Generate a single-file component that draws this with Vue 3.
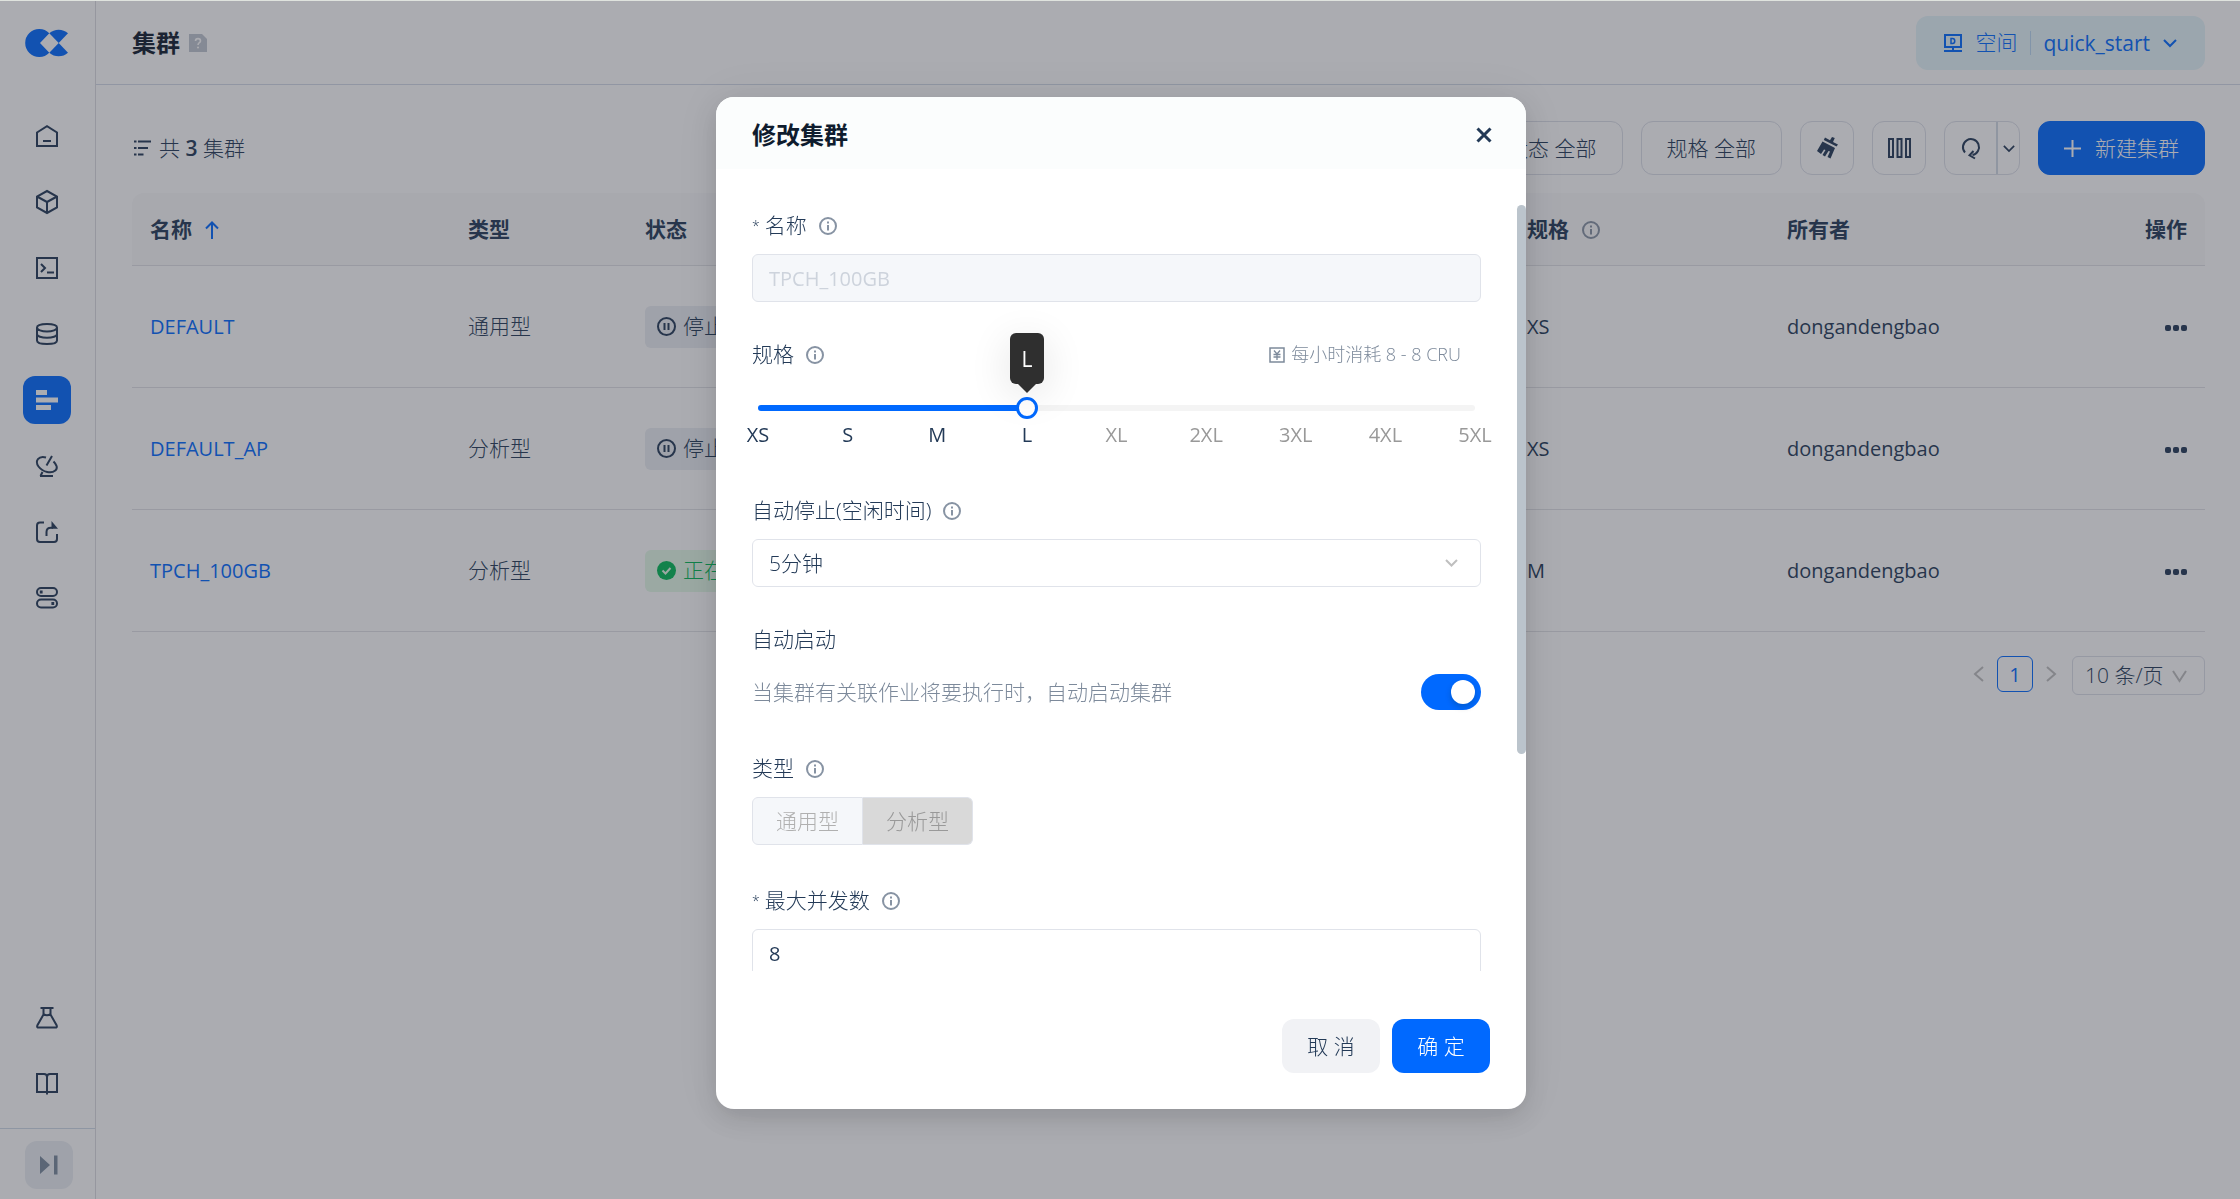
<template>
  <div class="app">
    <aside class="sidebar">
      <a href="#" class="logo" aria-label="Home">
        <svg width="42" height="28" viewBox="0 0 42 28" fill="#0069ff">
          <path d="M23.3 4.3A14 14 0 1 0 23.3 23.7L14 14Z" />
          <path d="M23.3 4.3A14 14 0 0 1 42 4.3L32.7 14Z" />
          <path d="M23.3 23.7A14 14 0 0 0 42 23.7L32.7 14Z" />
        </svg>
      </a>
      <nav class="nav">
        <a
          v-for="item in navItems"
          :key="item.name"
          href="#"
          class="nav-item"
          :class="{ active: item.active }"
          :aria-label="item.name"
        >
          <svg class="nav-icon" viewBox="0 0 22 22">
            <path v-if="item.line" :d="item.line" fill="none" stroke="currentColor" stroke-width="2" />
            <path v-if="item.fill" :d="item.fill" fill="currentColor" />
          </svg>
        </a>
      </nav>
      <nav class="nav nav-bottom">
        <a v-for="item in bottomItems" :key="item.name" href="#" class="nav-item" :aria-label="item.name">
          <svg class="nav-icon" viewBox="0 0 22 22">
            <path :d="item.line" fill="none" stroke="currentColor" stroke-width="2" />
          </svg>
        </a>
      </nav>
      <div class="collapse">
        <button type="button" class="collapse-btn" aria-label="Expand">
          <svg width="18" height="20" viewBox="0 0 18 20" fill="currentColor">
            <path d="M0 1L10 10L0 19ZM14 0.500H17.500V19.500H14Z" />
          </svg>
        </button>
      </div>
    </aside>

    <div class="main">
      <header class="topbar">
        <h1>集群</h1>
        <svg class="help" width="18" height="18" viewBox="0 0 18 18">
          <path d="M0 0H13L18 5V18H0Z" fill="#c0c6d0" />
          <path d="M6.500 7C6.500 3.800 11.500 3.800 11.500 7C11.500 8.800 9 8.600 9 11" fill="none" stroke="#fff" stroke-width="1.600" />
          <circle cx="9" cy="13.500" r="1" fill="#fff" />
        </svg>
        <button type="button" class="workspace">
          <svg width="18" height="18" viewBox="0 0 18 18" fill="none" stroke="currentColor" stroke-width="2">
            <path d="M1 1H17V13H1ZM9 13V17M0 17H18" />
            <path d="M7 4.500H8.500C11.500 4.500 11.500 9.500 8.500 9.500H7Z" stroke-width="1.500" />
          </svg>
          <span class="workspace-label">空间</span>
          <span class="workspace-name">quick_start</span>
          <svg class="chev" width="14" height="8" viewBox="0 0 14 8"><path d="M1 1L7 7L13 1" /></svg>
        </button>
      </header>

      <section class="content">
        <div class="toolbar">
          <svg width="17" height="16" viewBox="0 0 17 16" fill="currentColor">
            <path d="M0 0.500H2.500V2.500H0ZM4 0.500H17V2.500H4ZM0 7H2.500V9H0ZM4 7H14V9H4ZM0 13.500H2.500V15.500H0ZM4 13.500H9.500V15.500H4Z" />
          </svg>
          <p class="total">共 <b>3</b> 集群</p>
          <button type="button" class="tool filter">状态 全部</button>
          <button type="button" class="tool filter">规格 全部</button>
          <button type="button" class="tool square" aria-label="清除">
            <svg width="21" height="22" viewBox="0 0 21 22" fill="currentColor">
              <path d="M8 0.500L13 3.200L15 0L17.800 1L16 5L21 7.500L19.500 9.500L6.800 3Z" />
              <path d="M5.500 4.500L18 11L13.500 21.500L10.500 20L13 14.500L11.500 14L8 19.500L5.500 18L8.500 13L7 12.500L4 17L0 14Z" />
            </svg>
          </button>
          <button type="button" class="tool square" aria-label="列">
            <svg width="23" height="20" viewBox="0 0 23 20" fill="none" stroke="currentColor" stroke-width="2">
              <path d="M1 1H5V19H1ZM9.500 1H13.500V19H9.500ZM18 1H22V19H18Z" />
            </svg>
          </button>
          <div class="split">
            <button type="button" class="refresh" aria-label="刷新">
              <svg width="18" height="21" viewBox="0 0 18 21" fill="none" stroke="currentColor" stroke-width="2">
                <path d="M3 14.500A8 8 0 1 1 10.500 17" />
                <path d="M11.500 13L7.500 17.300L13 20.500" />
              </svg>
            </button>
            <button type="button" class="more" aria-label="更多">
              <svg class="chev" width="12" height="7" viewBox="0 0 14 8"><path d="M1 1L7 7L13 1" /></svg>
            </button>
          </div>
          <button type="button" class="tool create">
            <svg width="17" height="17" viewBox="0 0 17 17" stroke="currentColor" stroke-width="2"><path d="M8.500 0V17M0 8.500H17" /></svg>
            新建集群
          </button>
        </div>

        <table class="clusters">
          <colgroup>
            <col class="col-name" />
            <col class="col-type" />
            <col />
            <col class="col-size" />
            <col class="col-owner" />
            <col class="col-action" />
          </colgroup>
          <thead>
            <tr>
              <th>
                名称
                <svg class="sort" width="14" height="18" viewBox="0 0 14 18" fill="none" stroke="#0069ff" stroke-width="2"><path d="M7 18V1.500M1 7.500L7 1.500L13 7.500" /></svg>
              </th>
              <th>类型</th>
              <th>状态</th>
              <th>
                规格
                <svg class="info th-info" viewBox="0 0 18 18"><circle cx="9" cy="9" r="8" /><path d="M9 8V13.500M9 4.500V6.500" /></svg>
              </th>
              <th>所有者</th>
              <th class="right">操作</th>
            </tr>
          </thead>
          <tbody>
            <tr v-for="row in clusters" :key="row.name">
              <td><a href="#" class="latin">{{ row.name }}</a></td>
              <td>{{ row.type }}</td>
              <td>
                <span class="status" :class="{ running: row.running }">
                  <svg v-if="row.running" width="19" height="19" viewBox="0 0 19 19">
                    <circle cx="9.500" cy="9.500" r="9.500" fill="currentColor" />
                    <path d="M5.500 9.500L8.500 12.500L13.500 7" fill="none" stroke="#e4fae8" stroke-width="2" />
                  </svg>
                  <svg v-else width="19" height="19" viewBox="0 0 19 19" fill="none" stroke="currentColor">
                    <circle cx="9.500" cy="9.500" r="8.500" stroke-width="2" />
                    <path d="M7.500 6V13M11.500 6V13" stroke-width="2" />
                  </svg>
                  {{ row.running ? '正在运行' : '停止' }}
                </span>
              </td>
              <td class="latin">{{ row.size }}</td>
              <td class="latin">{{ row.owner }}</td>
              <td class="right">
                <button type="button" class="dots" aria-label="操作"><i></i><i></i><i></i></button>
              </td>
            </tr>
          </tbody>
        </table>

        <div class="pagination">
          <button type="button" class="page-arrow" aria-label="上一页">
            <svg width="10" height="16" viewBox="0 0 10 16"><path d="M9 1L1 8L9 15" /></svg>
          </button>
          <button type="button" class="page latin">1</button>
          <button type="button" class="page-arrow" aria-label="下一页">
            <svg width="10" height="16" viewBox="0 0 10 16"><path d="M1 1L9 8L1 15" /></svg>
          </button>
          <div class="select page-size">
            <select v-model="pageSize" aria-label="每页条数">
              <option>10 条/页</option>
              <option>20 条/页</option>
            </select>
            <svg width="15" height="12" viewBox="0 0 15 12"><path d="M1 1L7.500 11L14 1" /></svg>
          </div>
        </div>
      </section>
    </div>

    <div class="mask">
      <form class="dialog" role="dialog" aria-labelledby="dialog-title" @submit.prevent>
        <header class="dialog-header">
          <h2 id="dialog-title">修改集群</h2>
          <button type="button" class="close" aria-label="关闭">
            <svg width="16" height="16" viewBox="0 0 16 16" stroke="currentColor" stroke-width="3"><path d="M1.500 1.500L14.500 14.500M14.500 1.500L1.500 14.500" /></svg>
          </button>
        </header>

        <div class="dialog-body">
          <div class="fields">
            <div class="field">
              <label class="label required" for="name">
                名称
                <svg class="info" viewBox="0 0 18 18"><circle cx="9" cy="9" r="8" /><path d="M9 8V13.500M9 4.500V6.500" /></svg>
              </label>
              <input id="name" class="input latin" type="text" value="TPCH_100GB" disabled />
            </div>

            <div class="field">
              <div class="label-row">
                <label class="label" for="size">
                  规格
                  <svg class="info" viewBox="0 0 18 18"><circle cx="9" cy="9" r="8" /><path d="M9 8V13.500M9 4.500V6.500" /></svg>
                </label>
                <span class="cost">
                  <svg width="16" height="16" viewBox="0 0 16 16" fill="none" stroke="currentColor">
                    <path d="M1 1H15V15H1Z" stroke-width="1.500" />
                    <path d="M5 3.500L8 7L11 3.500M8 7V13M4.500 7.500H11.500M4.500 10H11.500" stroke-width="1.300" />
                  </svg>
                  每小时消耗 8 - 8 CRU
                </span>
              </div>
              <div class="slider">
                <div class="track">
                  <div class="fill" :style="{ width: percent }"></div>
                  <input id="size" v-model.number="size" type="range" min="0" max="8" step="1" />
                  <div class="tooltip" :style="{ left: percent }">{{ sizes[size] }}</div>
                </div>
                <div class="marks">
                  <span v-for="(s, i) in sizes" :key="s" class="mark" :class="{ off: i > size }">{{ s }}</span>
                </div>
              </div>
            </div>

            <div class="field">
              <label class="label" for="idle">
                自动停止(空闲时间)
                <svg class="info" viewBox="0 0 18 18"><circle cx="9" cy="9" r="8" /><path d="M9 8V13.500M9 4.500V6.500" /></svg>
              </label>
              <div class="select">
                <select id="idle" v-model="idle" class="input">
                  <option>5分钟</option>
                  <option>10分钟</option>
                </select>
                <svg width="13" height="8" viewBox="0 0 13 8"><path d="M1 1L6.500 6.500L12 1" /></svg>
              </div>
            </div>

            <div class="field">
              <label class="label" for="auto-start">自动启动</label>
              <div class="switch-row">
                <span>当集群有关联作业将要执行时，自动启动集群</span>
                <input id="auto-start" v-model="autoStart" class="switch" type="checkbox" />
              </div>
            </div>

            <fieldset class="field">
              <legend class="label">
                类型
                <svg class="info" viewBox="0 0 18 18"><circle cx="9" cy="9" r="8" /><path d="M9 8V13.500M9 4.500V6.500" /></svg>
              </legend>
              <div class="segments">
                <label class="segment"><input type="radio" name="type" disabled />通用型</label>
                <label class="segment checked"><input type="radio" name="type" checked disabled />分析型</label>
              </div>
            </fieldset>

            <div class="field">
              <label class="label required" for="concurrency">
                最大并发数
                <svg class="info" viewBox="0 0 18 18"><circle cx="9" cy="9" r="8" /><path d="M9 8V13.500M9 4.500V6.500" /></svg>
              </label>
              <input id="concurrency" v-model="concurrency" class="input latin" type="text" />
            </div>
          </div>
          <div class="scrollbar"><div class="scroll-thumb"></div></div>
        </div>

        <footer class="dialog-footer">
          <button type="button" class="btn">取 消</button>
          <button type="submit" class="btn primary">确 定</button>
        </footer>
      </form>
    </div>
  </div>
</template>

<script setup>
import { computed, ref } from 'vue'

const navItems = [
  { name: '首页', line: 'M1 7.500L11 1.200L21 7.500V21H1ZM7 16H15' },
  { name: '资源', line: 'M11 0L21 5.500V16.500L11 22L1 16.500V5.500ZM1 5.500L11 11L21 5.500M11 11V22' },
  { name: '开发', line: 'M1 1H21V21H1ZM5 7L9 11L5 15M11 15.500H18' },
  { name: '数据', line: 'M1 4.500C1 2.300 5.500 1 11 1S21 2.300 21 4.500S16.500 8.500 11 8.500S1 6.700 1 4.500V17.500C1 19.700 5.500 21 11 21S21 19.700 21 17.500V4.500M1 11C1 13.200 5.500 14.800 11 14.800S21 13.200 21 11' },
  { name: '集群', active: true, fill: 'M0 1H11V6H0ZM0 8.500H22V13.500H0ZM0 16H15V21H0Z' },
  { name: '监控', line: 'M10 2.500C2.500 0.500-1.500 6 2.500 11.500C7 17.500 15.500 18.800 19.300 15.500C22.200 13 20.500 9.500 17.500 6.500M10.500 10.500L16 1M4 21H17M6.500 17L4.500 21' },
  { name: '共享', line: 'M8 1.500H4C2 1.500 1 2.500 1 4.500V18C1 20 2 21 4 21H18C20 21 21 20 21 18V13M10.500 15V11C10.500 8 12 6.700 15 6.700H17', fill: 'M15.500 0L22 7.700H15.500Z' },
  { name: '管理', line: 'M5 1H17A4 4 0 0 1 17 9H5A4 4 0 0 1 5 1ZM5 12.500H17A4 4 0 0 1 17 20.500H5A4 4 0 0 1 5 12.500Z', fill: 'M3.800 3.500H6.600V6.500H3.800ZM15.400 15H18.200V18H15.400Z' },
]

const bottomItems = [
  { name: '实验室', line: 'M4.500 1H17.500M7.500 1V7.500L1.300 18.500C0.800 20 1.500 20.500 2.500 20.500H19.500C20.500 20.500 21.200 20 20.700 18.500L14.500 7.500V1M7.500 7C9.500 8.500 12.500 8.500 14.500 7' },
  { name: '文档', line: 'M1 1H8C10 1 11 2 11 4C11 2 12 1 14 1H21V19H1ZM11 4V21.500' },
]

const clusters = [
  { name: 'DEFAULT', type: '通用型', running: false, size: 'XS', owner: 'dongandengbao' },
  { name: 'DEFAULT_AP', type: '分析型', running: false, size: 'XS', owner: 'dongandengbao' },
  { name: 'TPCH_100GB', type: '分析型', running: true, size: 'M', owner: 'dongandengbao' },
]

const sizes = ['XS', 'S', 'M', 'L', 'XL', '2XL', '3XL', '4XL', '5XL']

const size = ref(3)
const idle = ref('5分钟')
const autoStart = ref(true)
const concurrency = ref('8')
const pageSize = ref('10 条/页')

const percent = computed(() => `${(size.value / (sizes.length - 1)) * 100}%`)
</script>

<style>
body {
  margin: 0;
}
</style>

<style scoped>
* {
  box-sizing: border-box;
}

.app {
  display: flex;
  min-height: 100vh;
  border-top: 1px solid #dfe3de;
  background: #fff;
  color: #233a57;
  font: 300 21px/33px 'Open Sans', 'Noto Sans CJK SC', sans-serif;
}

svg {
  flex: none;
  display: block;
  overflow: visible;
}

button,
input,
select {
  font: inherit;
  color: inherit;
}

button {
  display: flex;
  align-items: center;
  justify-content: center;
  padding: 0;
  border: none;
  background: none;
  white-space: nowrap;
}

a {
  color: #0069ff;
  text-decoration: none;
}

.latin {
  font-size: 20px;
  font-weight: 400;
}

.chev {
  fill: none;
  stroke: currentColor;
  stroke-width: 2;
}

.info {
  width: 18px;
  height: 18px;
  fill: none;
  stroke: #8793a3;
  stroke-width: 2;
}

/* sidebar */
.sidebar {
  display: flex;
  flex-direction: column;
  flex: none;
  width: 96px;
  border-right: 1px solid #dcdce2;
}

.logo {
  margin: 28px 0 0 26px;
}

.nav {
  display: flex;
  flex-direction: column;
  align-items: flex-start;
  gap: 18px;
  margin-top: 55px;
  padding-left: 23px;
}

.nav-bottom {
  margin-top: auto;
  margin-bottom: 20px;
}

.nav-item {
  display: flex;
  align-items: center;
  justify-content: center;
  width: 48px;
  height: 48px;
  border-radius: 12px;
  color: #233a57;
}

.nav-item.active {
  background: #0069ff;
  color: #fff;
}

.nav-icon {
  width: 22px;
  height: 22px;
}

.collapse {
  padding: 12px 0 10px 25px;
  border-top: 1px solid #cfdbe8;
}

.collapse-btn {
  width: 48px;
  height: 48px;
  border-radius: 12px;
  background: #ebeff4;
  color: #7a8a9d;
}

/* top bar */
.main {
  flex: 1;
  min-width: 0;
}

.topbar {
  display: flex;
  align-items: center;
  height: 84px;
  padding: 0 35px 0 36px;
  border-bottom: 1px solid #d4dbe8;
}

h1,
h2 {
  margin: 0;
  color: #0f1c2e;
  font-size: 24px;
  font-weight: 700;
}

.help {
  margin-left: 9px;
}

.workspace {
  gap: 13px;
  height: 54px;
  margin-left: auto;
  padding: 0 28px;
  border-radius: 12px;
  background: #e4f5fa;
  color: #0069ff;
}

.workspace-name {
  padding-left: 12px;
  border-left: 1px solid #b9d7f2;
  font-weight: 400;
  line-height: 24px;
}

/* toolbar */
.content {
  padding: 36px 35px 36px 36px;
}

.toolbar {
  display: flex;
  align-items: center;
  gap: 18px;
  padding-left: 2px;
}

.total {
  margin: 0 auto 0 -10px;
}

.total b {
  font-weight: 600;
}

.tool,
.split {
  height: 54px;
  border: 1px solid #dcdfe8;
  border-radius: 12px;
}

.filter {
  padding: 0 25px;
}

.square {
  width: 54px;
}

.split {
  display: flex;
}

.refresh {
  width: 51px;
}

.more {
  width: 23px;
  border-left: 2px solid #d2dae4;
}

.create {
  gap: 14px;
  padding: 0 25px;
  border-color: #0069ff;
  background: #0069ff;
  color: #fff;
}

/* table */
.clusters {
  width: 100%;
  margin-top: 18px;
  border-collapse: separate;
  border-spacing: 0;
  table-layout: fixed;
}

.col-name {
  width: 318px;
}

.col-type {
  width: 177px;
}

.col-size {
  width: 260px;
}

.col-owner {
  width: 260px;
}

.col-action {
  width: 176px;
}

th,
td {
  padding: 0 18px;
  border-bottom: 1px solid #e1e2e6;
  text-align: left;
}

th {
  height: 73px;
  background: #fafafb;
  font-weight: 700;
}

th:first-child {
  border-top-left-radius: 12px;
}

th:last-child {
  border-top-right-radius: 12px;
}

td {
  height: 122px;
}

th.right,
td.right {
  text-align: right;
}

.sort,
.th-info {
  display: inline-block;
  margin-left: 8px;
  vertical-align: -2px;
}

.status {
  display: inline-flex;
  align-items: center;
  gap: 7px;
  height: 42px;
  padding: 0 12px;
  border-radius: 6px;
  background: #ebeef3;
  vertical-align: middle;
}

.status.running {
  background: #e4fae8;
  color: #00b955;
}

.dots {
  display: inline-flex;
  gap: 2px;
  height: 24px;
  vertical-align: middle;
}

.dots i {
  width: 6px;
  height: 6px;
  border-radius: 2px;
  background: #233a57;
}

/* pagination */
.pagination {
  display: flex;
  justify-content: flex-end;
  margin-top: 24px;
}

.page {
  width: 36px;
  height: 36px;
  border: 1px solid #0069ff;
  border-radius: 6px;
  color: #0069ff;
}

.page-arrow {
  width: 36px;
  height: 36px;
}

.page-arrow path,
.select path {
  fill: none;
  stroke: #bfbfbf;
  stroke-width: 2;
}

.select {
  display: flex;
  align-items: center;
}

.select select {
  width: 100%;
  appearance: none;
}

.select svg {
  margin-left: -36px;
  margin-right: 23px;
  pointer-events: none;
}

.page-size select {
  width: 133px;
  height: 39px;
  margin: 0 0 0 3px;
  padding: 0 12px;
  border: 1px solid #dcdfe8;
  border-radius: 6px;
  background: none;
}

.page-size svg {
  margin-left: -33px;
  margin-right: 18px;
}

/* dialog */
.mask {
  position: fixed;
  inset: 1px 0 0;
  display: flex;
  justify-content: center;
  align-items: flex-start;
  padding: 96px 0 0 2px;
  background: rgba(45, 48, 60, 0.4);
}

.dialog {
  display: flex;
  flex-direction: column;
  width: 810px;
  border-radius: 18px;
  background: #fff;
  box-shadow: 0 9px 24px rgba(0, 0, 0, 0.12), 0 0 48px rgba(0, 0, 0, 0.06);
  overflow: hidden;
}

.dialog-header {
  display: flex;
  align-items: center;
  justify-content: space-between;
  height: 72px;
  padding: 3px 33px 0 36px;
  background: #fbfdfd;
}

.close {
  width: 18px;
  height: 18px;
}

.dialog-body {
  display: flex;
  margin-top: 36px;
  height: calc(100vh - 433px);
  overflow: hidden;
}

.fields {
  flex: 1;
  min-width: 0;
  padding: 4px 36px 0;
}

.scrollbar {
  width: 9px;
}

.scroll-thumb {
  height: 549px;
  border-radius: 5px;
  background: #bbc4cc;
}

.field {
  margin: 0 0 36px;
  padding: 0;
  border: none;
}

.label-row {
  display: flex;
  align-items: center;
  justify-content: space-between;
}

.label {
  display: flex;
  align-items: center;
  gap: 12px;
  padding: 0;
}

.required::before {
  content: '*';
  margin-right: -7px;
  font-size: 14px;
}

.input {
  display: block;
  width: 100%;
  height: 48px;
  margin: 12px 0 0;
  padding: 0 16px;
  border: 1px solid #e0e3ea;
  border-radius: 6px;
  background: #fff;
}

.input:disabled {
  background: #f5f7fa;
  color: #cdd3dc;
}

.select .input + svg {
  margin-top: 12px;
}

.cost {
  display: flex;
  align-items: center;
  gap: 6px;
  padding-right: 20px;
  color: #7d8a9b;
  font-size: 18px;
}

.slider {
  padding: 24px 6px 9px;
}

.track {
  position: relative;
  height: 26px;
  padding: 10px 0;
}

.track::before {
  content: '';
  position: absolute;
  inset: 10px 0;
  border-radius: 3px;
  background: #f4f4f4;
}

.fill {
  position: relative;
  height: 6px;
  border-radius: 3px;
  background: #0069ff;
}

.track input {
  position: absolute;
  top: 0;
  left: -11px;
  width: calc(100% + 22px);
  height: 26px;
  margin: 0;
  appearance: none;
  background: none;
}

.track input::-webkit-slider-thumb {
  width: 22px;
  height: 22px;
  border: 3px solid #0069ff;
  border-radius: 50%;
  appearance: none;
  background: #fff;
}

.tooltip {
  position: absolute;
  bottom: 37px;
  min-width: 34px;
  height: 51px;
  border-radius: 6px;
  background: #2f2f2f;
  box-shadow: 0 9px 42px rgba(0, 0, 0, 0.12);
  color: #fff;
  font-weight: 400;
  line-height: 52px;
  text-align: center;
  transform: translateX(-50%);
}

.tooltip::after {
  content: '';
  position: absolute;
  top: 100%;
  left: 50%;
  margin-left: -9px;
  border: 9px solid transparent;
  border-top-color: #2f2f2f;
  border-bottom: none;
}

.marks {
  display: flex;
  justify-content: space-between;
  font-size: 20px;
  line-height: 28px;
  font-weight: 400;
}

.mark {
  display: flex;
  justify-content: center;
  width: 0;
}

.mark.off {
  color: #999;
}

.switch-row {
  display: flex;
  align-items: center;
  justify-content: space-between;
  height: 48px;
  margin-top: 12px;
  color: #7d8a9b;
}

.switch {
  width: 60px;
  height: 36px;
  margin: 0;
  padding: 6px;
  border-radius: 18px;
  appearance: none;
  background: #c5ccd6;
}

.switch::before {
  content: '';
  display: block;
  width: 24px;
  height: 24px;
  border-radius: 50%;
  background: #fff;
  box-shadow: 0 3px 6px rgba(0, 35, 11, 0.2);
}

.switch:checked {
  background: #0069ff;
}

.switch:checked::before {
  margin-left: auto;
}

.segments {
  display: flex;
  padding: 12px 0 3px;
}

.segment {
  height: 48px;
  padding: 0 23px;
  border: 1px solid #e0e3ea;
  border-radius: 6px 0 0 6px;
  background: #f5f7fa;
  color: #b0b0b0;
  line-height: 46px;
}

.segment.checked {
  border-left: none;
  border-radius: 0 6px 6px 0;
  background: #d9d9d9;
  color: #999;
}

.segment input {
  position: absolute;
  opacity: 0;
}

.dialog-footer {
  display: flex;
  justify-content: flex-end;
  gap: 12px;
  padding: 48px 36px 36px;
}

.btn {
  width: 98px;
  height: 54px;
  border-radius: 12px;
  background: #f1f2f5;
}

.btn.primary {
  background: #0069ff;
  color: #fff;
}
</style>
